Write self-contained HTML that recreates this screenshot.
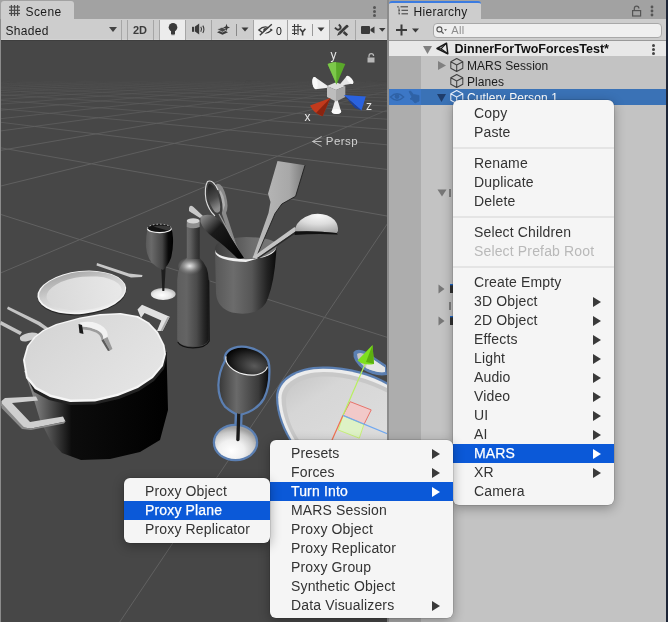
<!DOCTYPE html><html><head><meta charset="utf-8"><style>
*{box-sizing:border-box}
html,body{margin:0;padding:0}
body{width:668px;height:622px;overflow:hidden;position:relative;will-change:transform;background:#a2a2a2;font-family:"Liberation Sans",sans-serif;}
.abs{position:absolute}
.tab{position:absolute;background:#cdcdcd;border-radius:3px 3px 0 0}
.txt{position:absolute;white-space:nowrap;line-height:1}
.tb{position:absolute;top:19px;height:22px;background:#cdcdcd;border-bottom:1px solid #3e3e3e;box-shadow:inset 0 -1px 0 #d3d3d3}
.btn{position:absolute;top:20px;height:20px}
.sep{position:absolute;top:20px;width:1px;height:20px;background:#a6a6a6}
.menu{position:absolute;background:#f5f5f5;border-radius:6px;box-shadow:0 3px 12px rgba(0,0,0,0.32),0 0 0 0.5px rgba(0,0,0,0.18)}
.mi{position:absolute;left:0;right:0;height:19px;font-size:14px;letter-spacing:0.15px;color:#333}
.mi span{position:absolute;top:1.4px}
.hl{background:#0b59d8;color:#fff;-webkit-text-stroke:0.25px #fff}
.arr{position:absolute;width:0;height:0;border-top:5px solid transparent;border-bottom:5px solid transparent;border-left:8px solid #3a3a3a;top:4.5px}
.hl .arr{border-left-color:#fff}
.msep{position:absolute;left:0;right:0;height:2px;background:#e4e4e4}
</style></head><body><div class="tab" style="left:1px;top:1px;width:73px;height:18px"></div><svg class="abs" style="left:8px;top:4px" width="13" height="13" viewBox="0 0 13 13"><g stroke="#4a4a4a" stroke-width="1.2"><line x1="3.4" y1="1" x2="3.4" y2="12"/><line x1="6.5" y1="1" x2="6.5" y2="12"/><line x1="9.6" y1="1" x2="9.6" y2="12"/><line x1="1" y1="3" x2="12" y2="3"/><line x1="1" y1="6.3" x2="12" y2="6.3"/><line x1="1" y1="9.5" x2="12" y2="9.5"/></g></svg><div class="txt" style="left:25.5px;top:6px;font-size:12px;letter-spacing:0.4px;color:#1b1b1b">Scene</div><div class="abs" style="left:373px;top:6px;width:3px;height:3px;border-radius:2px;background:#555"></div><div class="abs" style="left:373px;top:10px;width:3px;height:3px;border-radius:2px;background:#555"></div><div class="abs" style="left:373px;top:14px;width:3px;height:3px;border-radius:2px;background:#555"></div><div class="tb" style="left:0;width:387px"></div><div class="abs" style="left:0;top:19px;width:1px;height:22px;background:#8c8c8c"></div><div class="txt" style="left:5.5px;top:24.5px;font-size:12px;letter-spacing:0.3px;color:#1b1b1b">Shaded</div><div class="abs" style="left:109px;top:27px;width:0;height:0;border-left:4px solid transparent;border-right:4px solid transparent;border-top:5px solid #444"></div><div class="sep" style="left:121px"></div><div class="sep" style="left:127px"></div><div class="txt" style="left:133px;top:25px;font-size:11px;font-weight:bold;color:#3c3c3c">2D</div><div class="sep" style="left:153px"></div><div class="sep" style="left:159px"></div><div class="btn" style="left:160px;width:25px;background:#ececec"></div><div class="sep" style="left:185px"></div><div class="sep" style="left:211px"></div><div class="btn" style="left:254px;width:33px;background:#ececec"></div><div class="sep" style="left:253px"></div><div class="sep" style="left:287px"></div><div class="btn" style="left:288px;width:41px;background:#ececec"></div><div class="sep" style="left:329px"></div><div class="sep" style="left:355px"></div><svg class="abs" style="left:0;top:19px" width="387" height="21" viewBox="0 19 387 21">
<g fill="#3a3a3a">
 <circle cx="173" cy="27.3" r="4.3"/><rect x="171" y="31" width="4" height="3"/><rect x="171.3" y="34" width="3.4" height="1.2" fill="#777"/>
 <rect x="192" y="26.8" width="2.2" height="5"/><path d="M195 26.6 L199.2 23.6 V34.4 L195 31.4 Z"/><path d="M200.8 26.8 q1.6 2.5 0 5" stroke="#3a3a3a" stroke-width="1.1" fill="none"/><path d="M202.8 25.6 q2.2 3.7 0 7.4" stroke="#3a3a3a" stroke-width="1.1" fill="none"/>
 <path d="M217 32.2 L222.5 29.6 L228 32.2 L222.5 34.8 Z"/><path d="M217 29.6 L222 27.2 L225 28.6 L227.5 29.6 L222.5 32.1 Z" fill="#4a4a4a" stroke="#cdcdcd" stroke-width="0.7"/><path d="M226.5 23.8 L227.4 26.6 L230 27.5 L227.4 28.4 L226.5 31.2 L225.6 28.4 L223 27.5 L225.6 26.6 Z"/>
 <rect x="236" y="24" width="1" height="12" fill="#888"/>
 <path d="M241.5 27.5h7l-3.5 4z"/>
 <path d="M258.8 30 Q265.3 23.8 271.8 30 Q265.3 36.2 258.8 30 Z" fill="none" stroke="#3a3a3a" stroke-width="1.3"/><circle cx="265.3" cy="30" r="2.1" fill="#3a3a3a"/><line x1="260.5" y1="36" x2="272.5" y2="25" stroke="#ececec" stroke-width="2.6"/><line x1="259.8" y1="35.2" x2="271.8" y2="24.2" stroke="#3a3a3a" stroke-width="1.4"/>
 <path d="M294.5 24v11M298 24v11M292 26.5h9.5M292 30h7M292 33.5h5" stroke="#3a3a3a" stroke-width="1.1" fill="none"/><path d="M299.8 28.8l2.8 3.2 2.8-3.2M302.6 32v3.5" stroke="#3a3a3a" stroke-width="1.6" fill="none"/>
 <rect x="312" y="24" width="1" height="12" fill="#999"/>
 <path d="M317.5 27.5h7l-3.5 4z"/>
 <path d="M336.2 25 Q335.8 29.6 339.3 29.4 Q341.6 29 341.2 25.4" stroke="#3a3a3a" stroke-width="1.9" fill="none" transform="rotate(-45 338.7 27.5) translate(-0.3 0)"/><path d="M343.6 32 L347.2 35.2" stroke="#3a3a3a" stroke-width="2.6" fill="none"/><path d="M346.3 26.8 L339.6 33.3" stroke="#3a3a3a" stroke-width="2.7" fill="none"/><circle cx="346.9" cy="26.2" r="1.5"/><path d="M338.6 32.3 L340.6 34.3 L337 35.8 Z"/><rect x="361" y="26" width="9" height="8" rx="1"/><path d="M370.5 29l4-2.5v7l-4-2.5z"/>
 <path d="M379 28h6.5l-3.25 3.8z"/>
</g></svg><div class="txt" style="left:276px;top:25.8px;font-size:10.5px;color:#111">0</div><svg class="abs" style="left:0;top:41px" width="387" height="581" viewBox="0 41 387 581">
<defs>
 <linearGradient id="fog" x1="0" y1="0" x2="0" y2="1"><stop offset="0" stop-color="#494949"/><stop offset="1" stop-color="#474747"/></linearGradient>
</defs>
<rect x="0" y="41" width="387" height="581" fill="#474747"/>
<g stroke="#616161" stroke-width="1" fill="none"><line x1="-6.7" y1="810.1" x2="324.5" y2="317.4" stroke-opacity="1.00"/><line x1="324.5" y1="317.4" x2="392.0" y2="216.9" stroke-opacity="1.00"/><line x1="961.8" y1="520.0" x2="324.5" y2="317.4" stroke-opacity="1.00"/><line x1="-269.6" y1="386.9" x2="79.8" y2="239.6" stroke-opacity="1.00"/><line x1="324.5" y1="317.4" x2="79.8" y2="239.6" stroke-opacity="1.00"/><line x1="79.8" y1="239.6" x2="209.9" y2="184.7" stroke-opacity="1.00"/><line x1="79.8" y1="239.6" x2="-49.6" y2="198.4" stroke-opacity="1.00"/><line x1="209.9" y1="184.7" x2="277.8" y2="156.1" stroke-opacity="0.92"/><line x1="277.8" y1="156.1" x2="319.5" y2="138.5" stroke-opacity="0.85"/><line x1="319.5" y1="138.5" x2="347.8" y2="126.6" stroke-opacity="0.78"/><line x1="347.8" y1="126.6" x2="368.2" y2="118.0" stroke-opacity="0.71"/><line x1="368.2" y1="118.0" x2="383.6" y2="111.5" stroke-opacity="0.65"/><line x1="383.6" y1="111.5" x2="395.6" y2="106.4" stroke-opacity="0.59"/><line x1="392.0" y1="216.9" x2="209.9" y2="184.7" stroke-opacity="0.99"/><line x1="-49.6" y1="198.4" x2="91.3" y2="163.8" stroke-opacity="0.95"/><line x1="209.9" y1="184.7" x2="91.3" y2="163.8" stroke-opacity="0.94"/><line x1="91.3" y1="163.8" x2="174.2" y2="143.4" stroke-opacity="0.87"/><line x1="91.3" y1="163.8" x2="8.0" y2="149.1" stroke-opacity="0.89"/><line x1="174.2" y1="143.4" x2="228.8" y2="130.0" stroke-opacity="0.80"/><line x1="8.0" y1="149.1" x2="-53.8" y2="138.2" stroke-opacity="0.84"/><line x1="228.8" y1="130.0" x2="267.5" y2="120.5" stroke-opacity="0.73"/><line x1="267.5" y1="120.5" x2="296.4" y2="113.4" stroke-opacity="0.67"/><line x1="296.4" y1="113.4" x2="318.7" y2="107.9" stroke-opacity="0.61"/><line x1="318.7" y1="107.9" x2="336.5" y2="103.6" stroke-opacity="0.55"/><line x1="336.5" y1="103.6" x2="351.0" y2="100.0" stroke-opacity="0.49"/><line x1="351.0" y1="100.0" x2="363.1" y2="97.0" stroke-opacity="0.44"/><line x1="363.1" y1="97.0" x2="373.3" y2="94.5" stroke-opacity="0.39"/><line x1="373.3" y1="94.5" x2="382.0" y2="92.4" stroke-opacity="0.34"/><line x1="382.0" y1="92.4" x2="389.6" y2="90.5" stroke-opacity="0.30"/><line x1="389.6" y1="90.5" x2="396.2" y2="88.9" stroke-opacity="0.25"/><line x1="421.1" y1="173.6" x2="277.8" y2="156.1" stroke-opacity="0.91"/><line x1="-129.7" y1="173.0" x2="8.0" y2="149.1" stroke-opacity="0.90"/><line x1="277.8" y1="156.1" x2="174.2" y2="143.4" stroke-opacity="0.86"/><line x1="8.0" y1="149.1" x2="95.9" y2="133.9" stroke-opacity="0.83"/><line x1="174.2" y1="143.4" x2="95.9" y2="133.9" stroke-opacity="0.81"/><line x1="95.9" y1="133.9" x2="156.8" y2="123.3" stroke-opacity="0.76"/><line x1="95.9" y1="133.9" x2="34.5" y2="126.4" stroke-opacity="0.77"/><line x1="156.8" y1="123.3" x2="201.6" y2="115.5" stroke-opacity="0.69"/><line x1="34.5" y1="126.4" x2="-14.9" y2="120.4" stroke-opacity="0.72"/><line x1="201.6" y1="115.5" x2="235.9" y2="109.6" stroke-opacity="0.63"/><line x1="235.9" y1="109.6" x2="263.0" y2="104.9" stroke-opacity="0.57"/><line x1="263.0" y1="104.9" x2="285.0" y2="101.1" stroke-opacity="0.51"/><line x1="285.0" y1="101.1" x2="303.1" y2="98.0" stroke-opacity="0.45"/><line x1="303.1" y1="98.0" x2="318.3" y2="95.3" stroke-opacity="0.40"/><line x1="318.3" y1="95.3" x2="331.3" y2="93.1" stroke-opacity="0.35"/><line x1="331.3" y1="93.1" x2="342.6" y2="91.1" stroke-opacity="0.31"/><line x1="342.6" y1="91.1" x2="352.3" y2="89.4" stroke-opacity="0.27"/><line x1="352.3" y1="89.4" x2="360.9" y2="87.9" stroke-opacity="0.23"/><line x1="360.9" y1="87.9" x2="368.5" y2="86.6" stroke-opacity="0.19"/><line x1="368.5" y1="86.6" x2="375.3" y2="85.4" stroke-opacity="0.16"/><line x1="375.3" y1="85.4" x2="381.4" y2="84.4" stroke-opacity="0.13"/><line x1="381.4" y1="84.4" x2="386.9" y2="83.4" stroke-opacity="0.10"/><line x1="386.9" y1="83.4" x2="391.9" y2="82.6" stroke-opacity="0.08"/><line x1="391.9" y1="82.6" x2="396.4" y2="81.8" stroke-opacity="0.06"/><line x1="437.3" y1="149.5" x2="319.5" y2="138.5" stroke-opacity="0.84"/><line x1="319.5" y1="138.5" x2="228.8" y2="130.0" stroke-opacity="0.79"/><line x1="-53.8" y1="138.2" x2="34.5" y2="126.4" stroke-opacity="0.78"/><line x1="228.8" y1="130.0" x2="156.8" y2="123.3" stroke-opacity="0.75"/><line x1="34.5" y1="126.4" x2="98.3" y2="117.8" stroke-opacity="0.71"/><line x1="156.8" y1="123.3" x2="98.3" y2="117.8" stroke-opacity="0.70"/><line x1="98.3" y1="117.8" x2="146.5" y2="111.4" stroke-opacity="0.65"/><line x1="98.3" y1="117.8" x2="49.7" y2="113.3" stroke-opacity="0.66"/><line x1="146.5" y1="111.4" x2="184.3" y2="106.3" stroke-opacity="0.59"/><line x1="49.7" y1="113.3" x2="8.8" y2="109.5" stroke-opacity="0.62"/><line x1="184.3" y1="106.3" x2="214.7" y2="102.3" stroke-opacity="0.53"/><line x1="8.8" y1="109.5" x2="-26.1" y2="106.2" stroke-opacity="0.57"/><line x1="214.7" y1="102.3" x2="239.6" y2="98.9" stroke-opacity="0.47"/><line x1="239.6" y1="98.9" x2="260.5" y2="96.1" stroke-opacity="0.42"/><line x1="260.5" y1="96.1" x2="278.2" y2="93.8" stroke-opacity="0.37"/><line x1="278.2" y1="93.8" x2="293.4" y2="91.7" stroke-opacity="0.32"/><line x1="293.4" y1="91.7" x2="306.6" y2="90.0" stroke-opacity="0.28"/><line x1="306.6" y1="90.0" x2="318.2" y2="88.4" stroke-opacity="0.24"/><line x1="318.2" y1="88.4" x2="328.4" y2="87.0" stroke-opacity="0.20"/><line x1="328.4" y1="87.0" x2="337.5" y2="85.8" stroke-opacity="0.17"/><line x1="337.5" y1="85.8" x2="345.7" y2="84.7" stroke-opacity="0.14"/><line x1="345.7" y1="84.7" x2="353.0" y2="83.7" stroke-opacity="0.11"/><line x1="353.0" y1="83.7" x2="359.7" y2="82.8" stroke-opacity="0.09"/><line x1="359.7" y1="82.8" x2="365.7" y2="82.0" stroke-opacity="0.07"/><line x1="365.7" y1="82.0" x2="371.3" y2="81.3" stroke-opacity="0.05"/><line x1="371.3" y1="81.3" x2="376.3" y2="80.6" stroke-opacity="0.03"/><line x1="447.6" y1="134.1" x2="347.8" y2="126.6" stroke-opacity="0.77"/><line x1="347.8" y1="126.6" x2="267.5" y2="120.5" stroke-opacity="0.72"/><line x1="267.5" y1="120.5" x2="201.6" y2="115.5" stroke-opacity="0.68"/><line x1="-14.9" y1="120.4" x2="49.7" y2="113.3" stroke-opacity="0.67"/><line x1="201.6" y1="115.5" x2="146.5" y2="111.4" stroke-opacity="0.64"/><line x1="49.7" y1="113.3" x2="99.8" y2="107.8" stroke-opacity="0.61"/><line x1="146.5" y1="111.4" x2="99.8" y2="107.8" stroke-opacity="0.60"/><line x1="99.8" y1="107.8" x2="139.7" y2="103.5" stroke-opacity="0.55"/><line x1="99.8" y1="107.8" x2="59.6" y2="104.8" stroke-opacity="0.56"/><line x1="139.7" y1="103.5" x2="172.3" y2="99.9" stroke-opacity="0.49"/><line x1="59.6" y1="104.8" x2="24.8" y2="102.2" stroke-opacity="0.52"/><line x1="172.3" y1="99.9" x2="199.4" y2="97.0" stroke-opacity="0.44"/><line x1="24.8" y1="102.2" x2="-5.8" y2="99.9" stroke-opacity="0.48"/><line x1="199.4" y1="97.0" x2="222.3" y2="94.5" stroke-opacity="0.39"/><line x1="222.3" y1="94.5" x2="241.9" y2="92.4" stroke-opacity="0.34"/><line x1="241.9" y1="92.4" x2="258.8" y2="90.5" stroke-opacity="0.29"/><line x1="258.8" y1="90.5" x2="273.7" y2="88.9" stroke-opacity="0.25"/><line x1="273.7" y1="88.9" x2="286.7" y2="87.5" stroke-opacity="0.22"/><line x1="286.7" y1="87.5" x2="298.3" y2="86.2" stroke-opacity="0.18"/><line x1="298.3" y1="86.2" x2="308.7" y2="85.1" stroke-opacity="0.15"/><line x1="308.7" y1="85.1" x2="318.0" y2="84.0" stroke-opacity="0.12"/><line x1="318.0" y1="84.0" x2="326.5" y2="83.1" stroke-opacity="0.10"/><line x1="326.5" y1="83.1" x2="334.1" y2="82.3" stroke-opacity="0.07"/><line x1="334.1" y1="82.3" x2="341.1" y2="81.5" stroke-opacity="0.05"/><line x1="341.1" y1="81.5" x2="347.5" y2="80.8" stroke-opacity="0.04"/><line x1="347.5" y1="80.8" x2="353.4" y2="80.2" stroke-opacity="0.02"/><line x1="454.8" y1="123.5" x2="368.2" y2="118.0" stroke-opacity="0.70"/><line x1="368.2" y1="118.0" x2="296.4" y2="113.4" stroke-opacity="0.66"/><line x1="296.4" y1="113.4" x2="235.9" y2="109.6" stroke-opacity="0.62"/><line x1="-55.4" y1="115.4" x2="8.8" y2="109.5" stroke-opacity="0.63"/><line x1="235.9" y1="109.6" x2="184.3" y2="106.3" stroke-opacity="0.58"/><line x1="8.8" y1="109.5" x2="59.6" y2="104.8" stroke-opacity="0.56"/><line x1="184.3" y1="106.3" x2="139.7" y2="103.5" stroke-opacity="0.54"/><line x1="59.6" y1="104.8" x2="100.8" y2="101.0" stroke-opacity="0.51"/><line x1="139.7" y1="103.5" x2="100.8" y2="101.0" stroke-opacity="0.50"/><line x1="100.8" y1="101.0" x2="134.9" y2="97.9" stroke-opacity="0.45"/><line x1="100.8" y1="101.0" x2="66.6" y2="98.9" stroke-opacity="0.46"/><line x1="134.9" y1="97.9" x2="163.5" y2="95.3" stroke-opacity="0.40"/><line x1="66.6" y1="98.9" x2="36.3" y2="96.9" stroke-opacity="0.43"/><line x1="163.5" y1="95.3" x2="187.9" y2="93.0" stroke-opacity="0.35"/><line x1="36.3" y1="96.9" x2="9.2" y2="95.2" stroke-opacity="0.39"/><line x1="187.9" y1="93.0" x2="209.0" y2="91.1" stroke-opacity="0.31"/><line x1="9.2" y1="95.2" x2="-15.2" y2="93.7" stroke-opacity="0.36"/><line x1="209.0" y1="91.1" x2="227.3" y2="89.4" stroke-opacity="0.27"/><line x1="227.3" y1="89.4" x2="243.4" y2="87.9" stroke-opacity="0.23"/><line x1="243.4" y1="87.9" x2="257.7" y2="86.6" stroke-opacity="0.19"/><line x1="257.7" y1="86.6" x2="270.5" y2="85.4" stroke-opacity="0.16"/><line x1="270.5" y1="85.4" x2="281.9" y2="84.4" stroke-opacity="0.13"/><line x1="281.9" y1="84.4" x2="292.2" y2="83.4" stroke-opacity="0.10"/><line x1="292.2" y1="83.4" x2="301.6" y2="82.6" stroke-opacity="0.08"/><line x1="301.6" y1="82.6" x2="310.1" y2="81.8" stroke-opacity="0.06"/><line x1="310.1" y1="81.8" x2="318.0" y2="81.0" stroke-opacity="0.04"/><line x1="318.0" y1="81.0" x2="325.1" y2="80.4" stroke-opacity="0.03"/><line x1="460.0" y1="115.7" x2="383.6" y2="111.5" stroke-opacity="0.64"/><line x1="383.6" y1="111.5" x2="318.7" y2="107.9" stroke-opacity="0.60"/><line x1="318.7" y1="107.9" x2="263.0" y2="104.9" stroke-opacity="0.56"/><line x1="263.0" y1="104.9" x2="214.7" y2="102.3" stroke-opacity="0.52"/><line x1="-26.1" y1="106.2" x2="24.8" y2="102.2" stroke-opacity="0.53"/><line x1="214.7" y1="102.3" x2="172.3" y2="99.9" stroke-opacity="0.48"/><line x1="24.8" y1="102.2" x2="66.6" y2="98.9" stroke-opacity="0.47"/><line x1="172.3" y1="99.9" x2="134.9" y2="97.9" stroke-opacity="0.44"/><line x1="66.6" y1="98.9" x2="101.6" y2="96.1" stroke-opacity="0.42"/><line x1="134.9" y1="97.9" x2="101.6" y2="96.1" stroke-opacity="0.41"/><line x1="101.6" y1="96.1" x2="131.3" y2="93.7" stroke-opacity="0.37"/><line x1="101.6" y1="96.1" x2="71.8" y2="94.4" stroke-opacity="0.38"/><line x1="131.3" y1="93.7" x2="156.8" y2="91.7" stroke-opacity="0.32"/><line x1="71.8" y1="94.4" x2="44.9" y2="93.0" stroke-opacity="0.35"/><line x1="156.8" y1="91.7" x2="178.9" y2="89.9" stroke-opacity="0.28"/><line x1="44.9" y1="93.0" x2="20.6" y2="91.6" stroke-opacity="0.32"/><line x1="178.9" y1="89.9" x2="198.4" y2="88.4" stroke-opacity="0.24"/><line x1="20.6" y1="91.6" x2="-1.6" y2="90.4" stroke-opacity="0.29"/><line x1="198.4" y1="88.4" x2="215.5" y2="87.0" stroke-opacity="0.20"/><line x1="-1.6" y1="90.4" x2="-21.8" y2="89.3" stroke-opacity="0.26"/><line x1="215.5" y1="87.0" x2="230.8" y2="85.8" stroke-opacity="0.17"/><line x1="230.8" y1="85.8" x2="244.5" y2="84.7" stroke-opacity="0.14"/><line x1="244.5" y1="84.7" x2="256.9" y2="83.7" stroke-opacity="0.11"/><line x1="256.9" y1="83.7" x2="268.1" y2="82.8" stroke-opacity="0.09"/><line x1="268.1" y1="82.8" x2="278.2" y2="82.0" stroke-opacity="0.07"/><line x1="278.2" y1="82.0" x2="287.5" y2="81.3" stroke-opacity="0.05"/><line x1="287.5" y1="81.3" x2="296.1" y2="80.6" stroke-opacity="0.03"/><line x1="395.6" y1="106.4" x2="336.5" y2="103.6" stroke-opacity="0.54"/><line x1="336.5" y1="103.6" x2="285.0" y2="101.1" stroke-opacity="0.50"/><line x1="285.0" y1="101.1" x2="239.6" y2="98.9" stroke-opacity="0.46"/><line x1="239.6" y1="98.9" x2="199.4" y2="97.0" stroke-opacity="0.43"/><line x1="-5.8" y1="99.9" x2="36.3" y2="96.9" stroke-opacity="0.44"/><line x1="199.4" y1="97.0" x2="163.5" y2="95.3" stroke-opacity="0.39"/><line x1="36.3" y1="96.9" x2="71.8" y2="94.4" stroke-opacity="0.39"/><line x1="163.5" y1="95.3" x2="131.3" y2="93.7" stroke-opacity="0.36"/><line x1="71.8" y1="94.4" x2="102.2" y2="92.3" stroke-opacity="0.34"/><line x1="131.3" y1="93.7" x2="102.2" y2="92.3" stroke-opacity="0.33"/><line x1="102.2" y1="92.3" x2="128.5" y2="90.5" stroke-opacity="0.29"/><line x1="102.2" y1="92.3" x2="75.7" y2="91.0" stroke-opacity="0.30"/><line x1="128.5" y1="90.5" x2="151.5" y2="88.9" stroke-opacity="0.25"/><line x1="75.7" y1="91.0" x2="51.6" y2="89.9" stroke-opacity="0.27"/><line x1="151.5" y1="88.9" x2="171.7" y2="87.4" stroke-opacity="0.22"/><line x1="51.6" y1="89.9" x2="29.6" y2="88.8" stroke-opacity="0.25"/><line x1="171.7" y1="87.4" x2="189.8" y2="86.2" stroke-opacity="0.18"/><line x1="29.6" y1="88.8" x2="9.3" y2="87.9" stroke-opacity="0.22"/><line x1="189.8" y1="86.2" x2="205.9" y2="85.0" stroke-opacity="0.15"/><line x1="9.3" y1="87.9" x2="-9.4" y2="87.0" stroke-opacity="0.20"/><line x1="205.9" y1="85.0" x2="220.4" y2="84.0" stroke-opacity="0.12"/><line x1="220.4" y1="84.0" x2="233.5" y2="83.1" stroke-opacity="0.09"/><line x1="233.5" y1="83.1" x2="245.4" y2="82.3" stroke-opacity="0.07"/><line x1="245.4" y1="82.3" x2="256.2" y2="81.5" stroke-opacity="0.05"/><line x1="256.2" y1="81.5" x2="266.2" y2="80.8" stroke-opacity="0.04"/><line x1="266.2" y1="80.8" x2="275.4" y2="80.2" stroke-opacity="0.02"/><line x1="405.3" y1="102.3" x2="351.0" y2="100.0" stroke-opacity="0.48"/><line x1="351.0" y1="100.0" x2="303.1" y2="98.0" stroke-opacity="0.45"/><line x1="303.1" y1="98.0" x2="260.5" y2="96.1" stroke-opacity="0.41"/><line x1="260.5" y1="96.1" x2="222.3" y2="94.5" stroke-opacity="0.38"/><line x1="-32.8" y1="97.8" x2="9.2" y2="95.2" stroke-opacity="0.40"/><line x1="222.3" y1="94.5" x2="187.9" y2="93.0" stroke-opacity="0.35"/><line x1="9.2" y1="95.2" x2="44.9" y2="93.0" stroke-opacity="0.35"/><line x1="187.9" y1="93.0" x2="156.8" y2="91.7" stroke-opacity="0.32"/><line x1="44.9" y1="93.0" x2="75.7" y2="91.0" stroke-opacity="0.31"/><line x1="156.8" y1="91.7" x2="128.5" y2="90.5" stroke-opacity="0.29"/><line x1="75.7" y1="91.0" x2="102.6" y2="89.4" stroke-opacity="0.27"/><line x1="128.5" y1="90.5" x2="102.6" y2="89.4" stroke-opacity="0.26"/><line x1="102.6" y1="89.4" x2="126.2" y2="87.9" stroke-opacity="0.23"/><line x1="102.6" y1="89.4" x2="78.9" y2="88.3" stroke-opacity="0.23"/><line x1="126.2" y1="87.9" x2="147.2" y2="86.6" stroke-opacity="0.19"/><line x1="78.9" y1="88.3" x2="57.0" y2="87.4" stroke-opacity="0.21"/><line x1="147.2" y1="86.6" x2="165.9" y2="85.4" stroke-opacity="0.16"/><line x1="57.0" y1="87.4" x2="36.9" y2="86.5" stroke-opacity="0.19"/><line x1="165.9" y1="85.4" x2="182.6" y2="84.3" stroke-opacity="0.13"/><line x1="36.9" y1="86.5" x2="18.2" y2="85.7" stroke-opacity="0.16"/><line x1="182.6" y1="84.3" x2="197.8" y2="83.4" stroke-opacity="0.10"/><line x1="18.2" y1="85.7" x2="0.9" y2="85.0" stroke-opacity="0.14"/><line x1="197.8" y1="83.4" x2="211.5" y2="82.5" stroke-opacity="0.08"/><line x1="0.9" y1="85.0" x2="-15.3" y2="84.3" stroke-opacity="0.12"/><line x1="211.5" y1="82.5" x2="224.0" y2="81.8" stroke-opacity="0.06"/><line x1="224.0" y1="81.8" x2="235.5" y2="81.0" stroke-opacity="0.04"/><line x1="235.5" y1="81.0" x2="246.0" y2="80.4" stroke-opacity="0.03"/><line x1="413.2" y1="99.0" x2="363.1" y2="97.0" stroke-opacity="0.43"/><line x1="363.1" y1="97.0" x2="318.3" y2="95.3" stroke-opacity="0.40"/><line x1="318.3" y1="95.3" x2="278.2" y2="93.8" stroke-opacity="0.36"/><line x1="278.2" y1="93.8" x2="241.9" y2="92.4" stroke-opacity="0.33"/><line x1="241.9" y1="92.4" x2="209.0" y2="91.1" stroke-opacity="0.30"/><line x1="-15.2" y1="93.7" x2="20.6" y2="91.6" stroke-opacity="0.32"/><line x1="209.0" y1="91.1" x2="178.9" y2="89.9" stroke-opacity="0.27"/><line x1="20.6" y1="91.6" x2="51.6" y2="89.9" stroke-opacity="0.28"/><line x1="178.9" y1="89.9" x2="151.5" y2="88.9" stroke-opacity="0.25"/><line x1="51.6" y1="89.9" x2="78.9" y2="88.3" stroke-opacity="0.24"/><line x1="151.5" y1="88.9" x2="126.2" y2="87.9" stroke-opacity="0.22"/><line x1="78.9" y1="88.3" x2="103.0" y2="87.0" stroke-opacity="0.20"/><line x1="126.2" y1="87.9" x2="103.0" y2="87.0" stroke-opacity="0.20"/><line x1="103.0" y1="87.0" x2="124.4" y2="85.8" stroke-opacity="0.17"/><line x1="103.0" y1="87.0" x2="81.4" y2="86.1" stroke-opacity="0.17"/><line x1="124.4" y1="85.8" x2="143.6" y2="84.7" stroke-opacity="0.14"/><line x1="81.4" y1="86.1" x2="61.5" y2="85.4" stroke-opacity="0.15"/><line x1="143.6" y1="84.7" x2="160.9" y2="83.7" stroke-opacity="0.11"/><line x1="61.5" y1="85.4" x2="42.9" y2="84.7" stroke-opacity="0.13"/><line x1="160.9" y1="83.7" x2="176.6" y2="82.8" stroke-opacity="0.09"/><line x1="42.9" y1="84.7" x2="25.6" y2="84.0" stroke-opacity="0.11"/><line x1="176.6" y1="82.8" x2="190.9" y2="82.0" stroke-opacity="0.06"/><line x1="25.6" y1="84.0" x2="9.4" y2="83.4" stroke-opacity="0.10"/><line x1="190.9" y1="82.0" x2="203.9" y2="81.3" stroke-opacity="0.05"/><line x1="9.4" y1="83.4" x2="-5.7" y2="82.8" stroke-opacity="0.08"/><line x1="203.9" y1="81.3" x2="215.9" y2="80.6" stroke-opacity="0.03"/><line x1="419.9" y1="96.2" x2="373.3" y2="94.5" stroke-opacity="0.38"/><line x1="373.3" y1="94.5" x2="331.3" y2="93.1" stroke-opacity="0.35"/><line x1="331.3" y1="93.1" x2="293.4" y2="91.7" stroke-opacity="0.32"/><line x1="293.4" y1="91.7" x2="258.8" y2="90.5" stroke-opacity="0.29"/><line x1="258.8" y1="90.5" x2="227.3" y2="89.4" stroke-opacity="0.26"/><line x1="-37.2" y1="92.3" x2="-1.6" y2="90.4" stroke-opacity="0.29"/><line x1="227.3" y1="89.4" x2="198.4" y2="88.4" stroke-opacity="0.23"/><line x1="-1.6" y1="90.4" x2="29.6" y2="88.8" stroke-opacity="0.25"/><line x1="198.4" y1="88.4" x2="171.7" y2="87.4" stroke-opacity="0.21"/><line x1="29.6" y1="88.8" x2="57.0" y2="87.4" stroke-opacity="0.21"/><line x1="171.7" y1="87.4" x2="147.2" y2="86.6" stroke-opacity="0.19"/><line x1="57.0" y1="87.4" x2="81.4" y2="86.1" stroke-opacity="0.18"/><line x1="147.2" y1="86.6" x2="124.4" y2="85.8" stroke-opacity="0.16"/><line x1="81.4" y1="86.1" x2="103.3" y2="85.0" stroke-opacity="0.15"/><line x1="124.4" y1="85.8" x2="103.3" y2="85.0" stroke-opacity="0.14"/><line x1="103.3" y1="85.0" x2="122.9" y2="84.0" stroke-opacity="0.12"/><line x1="103.3" y1="85.0" x2="83.6" y2="84.3" stroke-opacity="0.12"/><line x1="122.9" y1="84.0" x2="140.6" y2="83.1" stroke-opacity="0.09"/><line x1="83.6" y1="84.3" x2="65.2" y2="83.7" stroke-opacity="0.11"/><line x1="140.6" y1="83.1" x2="156.8" y2="82.3" stroke-opacity="0.07"/><line x1="65.2" y1="83.7" x2="48.0" y2="83.1" stroke-opacity="0.09"/><line x1="156.8" y1="82.3" x2="171.5" y2="81.5" stroke-opacity="0.05"/><line x1="48.0" y1="83.1" x2="31.8" y2="82.5" stroke-opacity="0.07"/><line x1="171.5" y1="81.5" x2="185.0" y2="80.8" stroke-opacity="0.04"/><line x1="31.8" y1="82.5" x2="16.7" y2="82.0" stroke-opacity="0.06"/><line x1="185.0" y1="80.8" x2="197.4" y2="80.2" stroke-opacity="0.02"/><line x1="16.7" y1="82.0" x2="2.4" y2="81.5" stroke-opacity="0.05"/><line x1="2.4" y1="81.5" x2="-11.0" y2="81.0" stroke-opacity="0.04"/><line x1="425.5" y1="93.8" x2="382.0" y2="92.4" stroke-opacity="0.33"/><line x1="382.0" y1="92.4" x2="342.6" y2="91.1" stroke-opacity="0.30"/><line x1="342.6" y1="91.1" x2="306.6" y2="90.0" stroke-opacity="0.27"/><line x1="306.6" y1="90.0" x2="273.7" y2="88.9" stroke-opacity="0.25"/><line x1="273.7" y1="88.9" x2="243.4" y2="87.9" stroke-opacity="0.22"/><line x1="243.4" y1="87.9" x2="215.5" y2="87.0" stroke-opacity="0.20"/><line x1="-21.8" y1="89.3" x2="9.3" y2="87.9" stroke-opacity="0.23"/><line x1="215.5" y1="87.0" x2="189.8" y2="86.2" stroke-opacity="0.18"/><line x1="9.3" y1="87.9" x2="36.9" y2="86.5" stroke-opacity="0.19"/><line x1="189.8" y1="86.2" x2="165.9" y2="85.4" stroke-opacity="0.15"/><line x1="36.9" y1="86.5" x2="61.5" y2="85.4" stroke-opacity="0.16"/><line x1="165.9" y1="85.4" x2="143.6" y2="84.7" stroke-opacity="0.13"/><line x1="61.5" y1="85.4" x2="83.6" y2="84.3" stroke-opacity="0.13"/><line x1="143.6" y1="84.7" x2="122.9" y2="84.0" stroke-opacity="0.12"/><line x1="83.6" y1="84.3" x2="103.5" y2="83.4" stroke-opacity="0.10"/><line x1="122.9" y1="84.0" x2="103.5" y2="83.4" stroke-opacity="0.10"/><line x1="103.5" y1="83.4" x2="121.6" y2="82.5" stroke-opacity="0.08"/><line x1="103.5" y1="83.4" x2="85.4" y2="82.8" stroke-opacity="0.08"/><line x1="121.6" y1="82.5" x2="138.1" y2="81.7" stroke-opacity="0.06"/><line x1="85.4" y1="82.8" x2="68.3" y2="82.2" stroke-opacity="0.07"/><line x1="138.1" y1="81.7" x2="153.2" y2="81.0" stroke-opacity="0.04"/><line x1="68.3" y1="82.2" x2="52.3" y2="81.7" stroke-opacity="0.05"/><line x1="153.2" y1="81.0" x2="167.1" y2="80.4" stroke-opacity="0.03"/><line x1="52.3" y1="81.7" x2="37.2" y2="81.2" stroke-opacity="0.04"/><line x1="37.2" y1="81.2" x2="23.0" y2="80.8" stroke-opacity="0.03"/><line x1="23.0" y1="80.8" x2="9.5" y2="80.3" stroke-opacity="0.02"/><line x1="430.4" y1="91.8" x2="389.6" y2="90.5" stroke-opacity="0.29"/><line x1="389.6" y1="90.5" x2="352.3" y2="89.4" stroke-opacity="0.26"/><line x1="352.3" y1="89.4" x2="318.2" y2="88.4" stroke-opacity="0.24"/><line x1="318.2" y1="88.4" x2="286.7" y2="87.5" stroke-opacity="0.21"/><line x1="286.7" y1="87.5" x2="257.7" y2="86.6" stroke-opacity="0.19"/><line x1="257.7" y1="86.6" x2="230.8" y2="85.8" stroke-opacity="0.16"/><line x1="230.8" y1="85.8" x2="205.9" y2="85.0" stroke-opacity="0.14"/><line x1="-9.4" y1="87.0" x2="18.2" y2="85.7" stroke-opacity="0.17"/><line x1="205.9" y1="85.0" x2="182.6" y2="84.3" stroke-opacity="0.12"/><line x1="18.2" y1="85.7" x2="42.9" y2="84.7" stroke-opacity="0.14"/><line x1="182.6" y1="84.3" x2="160.9" y2="83.7" stroke-opacity="0.11"/><line x1="42.9" y1="84.7" x2="65.2" y2="83.7" stroke-opacity="0.11"/><line x1="160.9" y1="83.7" x2="140.6" y2="83.1" stroke-opacity="0.09"/><line x1="65.2" y1="83.7" x2="85.4" y2="82.8" stroke-opacity="0.09"/><line x1="140.6" y1="83.1" x2="121.6" y2="82.5" stroke-opacity="0.08"/><line x1="85.4" y1="82.8" x2="103.7" y2="82.0" stroke-opacity="0.06"/><line x1="121.6" y1="82.5" x2="103.7" y2="82.0" stroke-opacity="0.06"/><line x1="103.7" y1="82.0" x2="120.5" y2="81.2" stroke-opacity="0.05"/><line x1="103.7" y1="82.0" x2="86.9" y2="81.5" stroke-opacity="0.05"/><line x1="120.5" y1="81.2" x2="135.9" y2="80.6" stroke-opacity="0.03"/><line x1="86.9" y1="81.5" x2="71.0" y2="81.0" stroke-opacity="0.04"/><line x1="71.0" y1="81.0" x2="56.0" y2="80.6" stroke-opacity="0.03"/><line x1="56.0" y1="80.6" x2="41.8" y2="80.1" stroke-opacity="0.02"/><line x1="396.2" y1="88.9" x2="360.9" y2="87.9" stroke-opacity="0.22"/><line x1="360.9" y1="87.9" x2="328.4" y2="87.0" stroke-opacity="0.20"/><line x1="328.4" y1="87.0" x2="298.3" y2="86.2" stroke-opacity="0.18"/><line x1="298.3" y1="86.2" x2="270.5" y2="85.4" stroke-opacity="0.15"/><line x1="270.5" y1="85.4" x2="244.5" y2="84.7" stroke-opacity="0.13"/><line x1="244.5" y1="84.7" x2="220.4" y2="84.0" stroke-opacity="0.12"/><line x1="-26.6" y1="86.1" x2="0.9" y2="85.0" stroke-opacity="0.15"/><line x1="220.4" y1="84.0" x2="197.8" y2="83.4" stroke-opacity="0.10"/><line x1="0.9" y1="85.0" x2="25.6" y2="84.0" stroke-opacity="0.12"/><line x1="197.8" y1="83.4" x2="176.6" y2="82.8" stroke-opacity="0.08"/><line x1="25.6" y1="84.0" x2="48.0" y2="83.1" stroke-opacity="0.09"/><line x1="176.6" y1="82.8" x2="156.8" y2="82.3" stroke-opacity="0.07"/><line x1="48.0" y1="83.1" x2="68.3" y2="82.2" stroke-opacity="0.07"/><line x1="156.8" y1="82.3" x2="138.1" y2="81.7" stroke-opacity="0.06"/><line x1="68.3" y1="82.2" x2="86.9" y2="81.5" stroke-opacity="0.05"/><line x1="138.1" y1="81.7" x2="120.5" y2="81.2" stroke-opacity="0.04"/><line x1="86.9" y1="81.5" x2="103.9" y2="80.8" stroke-opacity="0.04"/><line x1="120.5" y1="81.2" x2="103.9" y2="80.8" stroke-opacity="0.03"/><line x1="103.9" y1="80.8" x2="119.5" y2="80.1" stroke-opacity="0.02"/><line x1="103.9" y1="80.8" x2="88.2" y2="80.4" stroke-opacity="0.02"/><line x1="402.0" y1="87.5" x2="368.5" y2="86.6" stroke-opacity="0.19"/><line x1="368.5" y1="86.6" x2="337.5" y2="85.8" stroke-opacity="0.17"/><line x1="337.5" y1="85.8" x2="308.7" y2="85.1" stroke-opacity="0.14"/><line x1="308.7" y1="85.1" x2="281.9" y2="84.4" stroke-opacity="0.13"/><line x1="281.9" y1="84.4" x2="256.9" y2="83.7" stroke-opacity="0.11"/><line x1="256.9" y1="83.7" x2="233.5" y2="83.1" stroke-opacity="0.09"/><line x1="233.5" y1="83.1" x2="211.5" y2="82.5" stroke-opacity="0.08"/><line x1="-15.3" y1="84.3" x2="9.4" y2="83.4" stroke-opacity="0.10"/><line x1="211.5" y1="82.5" x2="190.9" y2="82.0" stroke-opacity="0.06"/><line x1="9.4" y1="83.4" x2="31.8" y2="82.5" stroke-opacity="0.08"/><line x1="190.9" y1="82.0" x2="171.5" y2="81.5" stroke-opacity="0.05"/><line x1="31.8" y1="82.5" x2="52.3" y2="81.7" stroke-opacity="0.06"/><line x1="171.5" y1="81.5" x2="153.2" y2="81.0" stroke-opacity="0.04"/><line x1="52.3" y1="81.7" x2="71.0" y2="81.0" stroke-opacity="0.04"/><line x1="153.2" y1="81.0" x2="135.9" y2="80.6" stroke-opacity="0.03"/><line x1="71.0" y1="81.0" x2="88.2" y2="80.4" stroke-opacity="0.03"/><line x1="135.9" y1="80.6" x2="119.5" y2="80.1" stroke-opacity="0.02"/><line x1="407.1" y1="86.2" x2="375.3" y2="85.4" stroke-opacity="0.16"/><line x1="375.3" y1="85.4" x2="345.7" y2="84.7" stroke-opacity="0.13"/><line x1="345.7" y1="84.7" x2="318.0" y2="84.0" stroke-opacity="0.12"/><line x1="318.0" y1="84.0" x2="292.2" y2="83.4" stroke-opacity="0.10"/><line x1="292.2" y1="83.4" x2="268.1" y2="82.8" stroke-opacity="0.08"/><line x1="268.1" y1="82.8" x2="245.4" y2="82.3" stroke-opacity="0.07"/><line x1="245.4" y1="82.3" x2="224.0" y2="81.8" stroke-opacity="0.06"/><line x1="224.0" y1="81.8" x2="203.9" y2="81.3" stroke-opacity="0.04"/><line x1="-5.7" y1="82.8" x2="16.7" y2="82.0" stroke-opacity="0.06"/><line x1="203.9" y1="81.3" x2="185.0" y2="80.8" stroke-opacity="0.03"/><line x1="16.7" y1="82.0" x2="37.2" y2="81.2" stroke-opacity="0.05"/><line x1="185.0" y1="80.8" x2="167.1" y2="80.4" stroke-opacity="0.02"/><line x1="37.2" y1="81.2" x2="56.0" y2="80.6" stroke-opacity="0.03"/><line x1="411.8" y1="85.1" x2="381.4" y2="84.4" stroke-opacity="0.13"/><line x1="381.4" y1="84.4" x2="353.0" y2="83.7" stroke-opacity="0.11"/><line x1="353.0" y1="83.7" x2="326.5" y2="83.1" stroke-opacity="0.09"/><line x1="326.5" y1="83.1" x2="301.6" y2="82.6" stroke-opacity="0.08"/><line x1="301.6" y1="82.6" x2="278.2" y2="82.0" stroke-opacity="0.06"/><line x1="278.2" y1="82.0" x2="256.2" y2="81.5" stroke-opacity="0.05"/><line x1="256.2" y1="81.5" x2="235.5" y2="81.0" stroke-opacity="0.04"/><line x1="235.5" y1="81.0" x2="215.9" y2="80.6" stroke-opacity="0.03"/><line x1="-20.0" y1="82.2" x2="2.4" y2="81.5" stroke-opacity="0.05"/><line x1="215.9" y1="80.6" x2="197.4" y2="80.2" stroke-opacity="0.02"/><line x1="2.4" y1="81.5" x2="23.0" y2="80.8" stroke-opacity="0.04"/><line x1="23.0" y1="80.8" x2="41.8" y2="80.1" stroke-opacity="0.02"/><line x1="415.9" y1="84.1" x2="386.9" y2="83.4" stroke-opacity="0.10"/><line x1="386.9" y1="83.4" x2="359.7" y2="82.8" stroke-opacity="0.08"/><line x1="359.7" y1="82.8" x2="334.1" y2="82.3" stroke-opacity="0.07"/><line x1="334.1" y1="82.3" x2="310.1" y2="81.8" stroke-opacity="0.06"/><line x1="310.1" y1="81.8" x2="287.5" y2="81.3" stroke-opacity="0.04"/><line x1="287.5" y1="81.3" x2="266.2" y2="80.8" stroke-opacity="0.03"/><line x1="266.2" y1="80.8" x2="246.0" y2="80.4" stroke-opacity="0.02"/><line x1="-11.0" y1="81.0" x2="9.5" y2="80.3" stroke-opacity="0.03"/><line x1="419.7" y1="83.1" x2="391.9" y2="82.6" stroke-opacity="0.08"/><line x1="391.9" y1="82.6" x2="365.7" y2="82.0" stroke-opacity="0.06"/><line x1="365.7" y1="82.0" x2="341.1" y2="81.5" stroke-opacity="0.05"/><line x1="341.1" y1="81.5" x2="318.0" y2="81.0" stroke-opacity="0.04"/><line x1="318.0" y1="81.0" x2="296.1" y2="80.6" stroke-opacity="0.03"/><line x1="296.1" y1="80.6" x2="275.4" y2="80.2" stroke-opacity="0.02"/><line x1="396.4" y1="81.8" x2="371.3" y2="81.3" stroke-opacity="0.04"/><line x1="371.3" y1="81.3" x2="347.5" y2="80.8" stroke-opacity="0.03"/><line x1="347.5" y1="80.8" x2="325.1" y2="80.4" stroke-opacity="0.02"/><line x1="400.5" y1="81.1" x2="376.3" y2="80.6" stroke-opacity="0.03"/><line x1="376.3" y1="80.6" x2="353.4" y2="80.2" stroke-opacity="0.02"/></g>
<rect x="0" y="41" width="1" height="581" fill="#8c8c8c"/>
<defs>
 <linearGradient id="potBody" x1="0" y1="0" x2="1" y2="0" gradientUnits="objectBoundingBox">
  <stop offset="0" stop-color="#a0a0a0"/><stop offset="0.12" stop-color="#6a6a6a"/><stop offset="0.33" stop-color="#0c0c0c"/><stop offset="1" stop-color="#000"/>
 </linearGradient>
 <linearGradient id="lidG" x1="0.8" y1="0" x2="0.2" y2="1">
  <stop offset="0" stop-color="#e4e4e4"/><stop offset="0.5" stop-color="#dcdcdc"/><stop offset="1" stop-color="#d2d2d2"/>
 </linearGradient>
 <linearGradient id="plateG" x1="0" y1="0" x2="1" y2="0">
  <stop offset="0" stop-color="#d9d9d9"/><stop offset="1" stop-color="#ececec"/>
 </linearGradient>
 <linearGradient id="glassG" x1="0" y1="0" x2="1" y2="0">
  <stop offset="0" stop-color="#5a5a5a"/><stop offset="0.2" stop-color="#6a6a6a"/><stop offset="0.6" stop-color="#454545"/><stop offset="0.82" stop-color="#0a0a0a"/><stop offset="1" stop-color="#000"/>
 </linearGradient>
 <linearGradient id="glass2G" x1="0" y1="0" x2="1" y2="0">
  <stop offset="0" stop-color="#3a3a3a"/><stop offset="0.35" stop-color="#6a6a6a"/><stop offset="0.8" stop-color="#3a3a3a"/><stop offset="1" stop-color="#0a0a0a"/>
 </linearGradient>
 <radialGradient id="baseG" cx="0.45" cy="0.6" r="0.6">
  <stop offset="0" stop-color="#ffffff"/><stop offset="0.6" stop-color="#e8e8e8"/><stop offset="1" stop-color="#b8b8b8"/>
 </radialGradient>
 <linearGradient id="bottleG" x1="0" y1="0" x2="1" y2="0">
  <stop offset="0" stop-color="#5e5e5e"/><stop offset="0.3" stop-color="#646464"/><stop offset="0.62" stop-color="#4a4a4a"/><stop offset="0.85" stop-color="#262626"/><stop offset="1" stop-color="#141414"/>
 </linearGradient>
 <radialGradient id="shoulderG" cx="0.45" cy="0.5" r="0.5">
  <stop offset="0" stop-color="#e8e8e8"/><stop offset="0.35" stop-color="#a8a8a8"/><stop offset="1" stop-color="#6e6e6e" stop-opacity="0"/>
 </radialGradient>
 <linearGradient id="cupG" x1="0" y1="0" x2="1" y2="0">
  <stop offset="0" stop-color="#585858"/><stop offset="0.3" stop-color="#6c6c6c"/><stop offset="0.6" stop-color="#565656"/><stop offset="0.85" stop-color="#222"/><stop offset="1" stop-color="#0a0a0a"/>
 </linearGradient>
 <linearGradient id="ladleG" x1="0" y1="0" x2="1" y2="0">
  <stop offset="0" stop-color="#c0c0c0"/><stop offset="0.6" stop-color="#f0f0f0"/><stop offset="1" stop-color="#d0d0d0"/>
 </linearGradient>
 <linearGradient id="bigPlateG" x1="0" y1="0" x2="1" y2="1">
  <stop offset="0" stop-color="#d0d0d0"/><stop offset="1" stop-color="#e4e4e4"/>
 </linearGradient>
</defs>

<!-- knife & spoon left -->
<path d="M8 306.5 L40 322 L49 328.5 L47 331 L38 325 L7 309z" fill="#c4c4c4"/>
<path d="M1 321 L22 332 L20 335 L0 324.5z" fill="#c4c4c4"/>
<path d="M20 337 Q24 333 32 332.5 Q39 332.5 38.5 335.5 Q34 340 26 341.5 Q19 342 20 337z" fill="#cdcdcd"/>
<!-- fork behind plate -->
<path d="M97 263 L129 273.5 L142.5 275 L142 277 L131 277.5 L96.5 265.5z" fill="#c8c8c8"/>
<!-- left plate -->
<defs>
 <linearGradient id="rimG" x1="0.2" y1="0" x2="0.6" y2="1"><stop offset="0" stop-color="#a4a4a4"/><stop offset="0.45" stop-color="#cfcfcf"/><stop offset="1" stop-color="#ececec"/></linearGradient>
 <linearGradient id="plateInG" x1="0" y1="0" x2="1" y2="0"><stop offset="0" stop-color="#d8d8d8"/><stop offset="1" stop-color="#e8e8e8"/></linearGradient>
</defs>
<g transform="rotate(-6 81.8 292.4)">
 <ellipse cx="81.8" cy="293.6" rx="44.6" ry="21.4" fill="#262626"/>
 <ellipse cx="81.8" cy="292.4" rx="44.6" ry="21.4" fill="#f4f4f4"/>
 <ellipse cx="82.2" cy="292" rx="43.2" ry="20.2" fill="url(#rimG)"/>
 <ellipse cx="84" cy="293.6" rx="37.8" ry="16.6" fill="url(#plateInG)"/>
</g>
<!-- small glass -->
<ellipse cx="163.2" cy="294" rx="12.4" ry="6" fill="url(#baseG)"/>
<path d="M161 262 L162.3 291 L164.3 291 L166 262z" fill="#1e1e1e"/>
<path d="M147.5 229 Q145.5 238 146 247 Q147 257 152 263 Q157 268 163 270 Q168 266 171 258 Q173.5 248 173 238 Q172.5 232 171.4 227.6 Q160 224 147.5 229z" fill="url(#glassG)"/>
<ellipse cx="159.4" cy="228.4" rx="12" ry="4.2" fill="#111"/>
<path d="M159.4 228.4 m-6 -2 a12 4.2 0 0 1 17 0.5 q1 2 -3 3.5z" fill="#4a4a4a" opacity="0.7"/>
<path d="M147.4 228.6 A12 4.2 0 0 0 171.4 228.2" fill="none" stroke="#f0f0f0" stroke-width="1.1"/>
<path d="M147.4 228.4 A12 4.2 0 0 1 171.4 228.4" fill="none" stroke="#d8d8d8" stroke-width="0.8" stroke-dasharray="1.5 2"/>
<!-- bottle -->
<defs>
 <linearGradient id="neckG" x1="0" y1="0" x2="1" y2="0"><stop offset="0" stop-color="#6a6a6a"/><stop offset="0.3" stop-color="#5e5e5e"/><stop offset="0.7" stop-color="#3c3c3c"/><stop offset="1" stop-color="#2a2a2a"/></linearGradient>
</defs>
<path d="M208.7 280 L209.2 341 Q206 347.8 193 347.8 Q181 347.8 177.8 342" fill="none" stroke="#111" stroke-width="1.2"/><path d="M177.2 280 Q177.5 266 186.8 258 L199.7 258 Q208.5 266 208.7 280 L208.7 340 Q206 346.5 193 346.5 Q180 346.5 177.2 340z" fill="url(#bottleG)"/>
<ellipse cx="191" cy="266" rx="13" ry="9" fill="url(#shoulderG)"/>
<path d="M186.8 224 L186.8 259 L199.7 259 L199.7 224z" fill="url(#neckG)"/>
<path d="M186.8 221 L186.8 227 Q193 229.5 199.7 227 L199.7 221z" fill="#8e8e8e"/>
<ellipse cx="193.2" cy="220.8" rx="6.4" ry="2.6" fill="#d4d4d4"/>
<!-- pot right handle -->
<path d="M137.5 309.5 L142 304.8 L169.7 316.8 L162.5 331 L157 331 L161.3 320.4 L144.5 313 L141 318z" fill="#e0e0e0"/><path d="M169.7 316.8 L162.5 331 L160.5 331 L167.5 317z" fill="#a8a8a8"/>
<!-- pot body -->
<path d="M24 371 L31 390 L40 420 L50 440 L62 453 L81 460 L110 459 L140 452 L160 440 L168 410 L166.5 352 Z" fill="url(#potBody)"/>
<!-- pot left handle -->
<path d="M1.5 401 L5 398 L36 396.5 L38 400.5 L12 403 L30 422 L63 416.5 L65.5 421.5 L31 428.5 L24 427.5 L1.5 406z" fill="#cfcfcf"/>
<path d="M1.5 403 L24 427.5 L31 428.5 L65.5 421.5 L64 423.5 L31 430 L22 429 L1.5 408z" fill="#8a8a8a"/>
<!-- pot lid -->
<defs><linearGradient id="lidG2" x1="0" y1="0.2" x2="1" y2="0.8"><stop offset="0" stop-color="#d4d4d4"/><stop offset="0.55" stop-color="#dedede"/><stop offset="1" stop-color="#e6e6e6"/></linearGradient></defs>
<path d="M24 371 L35 389 L50 397 L70 402 L95 401.5 L118 396 L138 388 L153 378 L163 366 L166 354 L166.5 358 L164 369 L154 381 L139 391 L119 399 L95 404.5 L70 405 L49 400 L34 392 Z" fill="#222"/>
<path d="M23.0 360.0 L27.0 346.0 L34.0 337.0 L43.0 330.0 L56.0 324.0 L80.0 317.5 L100.0 314.0 L120.6 313.0 L138.0 316.0 L149.0 322.5 L158.0 332.0 L164.5 345.0 L166.0 354.0 L163.0 366.0 L153.0 378.0 L138.0 388.0 L118.0 396.0 L95.0 401.5 L70.0 402.0 L50.0 397.0 L35.0 389.0 L26.0 378.0 Z" fill="#f6f6f6"/>
<path d="M24.8 359.4 L28.7 346.0 L35.5 337.4 L44.3 330.8 L57.0 325.0 L80.4 318.8 L99.9 315.5 L120.0 314.5 L136.9 317.4 L147.7 323.6 L156.4 332.7 L162.8 345.1 L164.2 353.7 L161.3 365.1 L151.6 376.6 L136.9 386.1 L117.4 393.8 L95.0 399.0 L70.6 399.5 L51.1 394.7 L36.5 387.1 L27.7 376.6 Z" fill="url(#lidG2)"/>
<!-- lid knob -->
<path d="M81 326.5 Q89 326 97 330 Q103.5 333 103.5 339 L101.5 340.5 Q101 335 96 332.5 Q89 329 81 329.5z" fill="#9c9c9c"/><path d="M80 322.5 Q95 319.5 104 327.5 Q108.5 332 107.5 337 L112.5 349 L110 350.5 L103.5 339 Q103.5 333 97 330 Q89 326 81 326.5z" fill="#f2f2f2"/>
<path d="M107.5 337 L112.5 349 L110 350.5 L103.5 339z" fill="#9a9a9a"/>
<path d="M103.5 339 L110 350.5 L108 351 L101.5 340.5z" fill="#5a5a5a"/>
<path d="M78.5 324 L82 325 L83.5 334 L79.5 333z" fill="#1a1a1a"/>
<!-- cup (utensil holder) -->
<defs>
 <linearGradient id="spoon1G" x1="0" y1="0" x2="0.3" y2="1"><stop offset="0" stop-color="#1e1e1e"/><stop offset="0.6" stop-color="#4a4a4a"/><stop offset="1" stop-color="#8a8a8a"/></linearGradient>
 <linearGradient id="spoon3G" x1="0" y1="0" x2="1" y2="1"><stop offset="0" stop-color="#9a9a9a"/><stop offset="0.35" stop-color="#1a1a1a"/><stop offset="1" stop-color="#000"/></linearGradient>
 <linearGradient id="cupInG" x1="0" y1="0" x2="1" y2="0"><stop offset="0" stop-color="#3e3e3e"/><stop offset="0.6" stop-color="#6e6e6e"/><stop offset="1" stop-color="#7a7a7a"/></linearGradient>
 <linearGradient id="spatG" x1="0" y1="0" x2="1" y2="0"><stop offset="0" stop-color="#bdbdbd"/><stop offset="0.7" stop-color="#a8a8a8"/><stop offset="1" stop-color="#7a7a7a"/></linearGradient>
</defs>
<!-- cup interior back -->
<path d="M215 250 Q213 238 246.4 236.9 Q279 238 276.5 247 Q275 258 246 259.3 Q216 260 215 250z" fill="url(#cupInG)"/>
<!-- small light spoon behind bottle -->
<path d="M189 208 Q190 204 193.5 207 L203 216 L200 218 Q192 213 189 211z" fill="#c8c8c8"/>
<!-- spoon 2 (behind right) -->
<path d="M216.5 184 Q222 182 226 196 Q229 207 226 213 L240 256 L236.5 257 L222 214 Q217 206 215.5 195 Q215 186 216.5 184z" fill="#8a8a8a"/>
<path d="M220 190 Q224 194 225 205 L223 211 Q219 204 219 194z" fill="#b0b0b0"/>
<!-- spoon 1 (front tall) -->
<path d="M207.5 181.5 Q213 179 218 190 Q223 200 222.5 210 Q222 214 220 216 L243 257 L239.5 258.5 L216.5 218 Q209 212 206 200 Q204 188 207.5 181.5z" fill="#3e3e3e"/>
<path d="M209 184 Q213.5 183 217.5 194 Q221 204 220 211 Q218 214 215 212 Q210 206 208 197 Q206.5 188 209 184z" fill="url(#spoon1G)"/>
<path d="M207.5 181.5 Q213 179 218 190 M207.5 181.5 Q204 188 206 200 Q208.5 210 215 216" fill="none" stroke="#dcdcdc" stroke-width="1.1"/>
<path d="M219 214 L242 256.5" stroke="#9a9a9a" stroke-width="1.2"/>
<!-- spoon 3 (front dark) -->
<path d="M200.5 217 Q206 213 214 216 Q223 221 230 236 L244 258 L238 259 Q225 246 214 238 Q203 230 200.5 222z" fill="url(#spoon3G)"/>
<!-- spatula -->
<path d="M277.5 161 L305 165.3 L295.6 196.3 L281.8 204 L275 213.5 L256 258 L252.6 258 L268.5 213 L270.5 202 L268 193.7z" fill="url(#spatG)"/>
<path d="M305 165.3 L295.6 196.3 L281.8 204 L275 213.5 L256 258" fill="none" stroke="#1e1e1e" stroke-width="0.9"/>
<!-- ladle -->
<defs><radialGradient id="ladleG2" cx="0.55" cy="0.1" r="0.9"><stop offset="0" stop-color="#f8f8f8"/><stop offset="0.5" stop-color="#dcdcdc"/><stop offset="1" stop-color="#a8a8a8"/></radialGradient></defs>
<path d="M252.5 257 L256.5 258.5 L297 230.5 L294.5 227z" fill="#c4c4c4"/>
<path d="M256.5 258.5 L297 230.5 L297.5 232 L258 259z" fill="#2a2a2a"/>
<path d="M294.8 229 Q297 219 312 214.2 Q326 212 334.5 220 Q338.5 225 338 231 L336.5 233 Q316 230.5 295 231.5 Z" fill="url(#ladleG2)"/>
<path d="M295 231.5 Q316 230.5 336.5 233 L337.8 234.5 Q316 233.2 294.5 235 Z" fill="#111"/>
<!-- cup body -->
<path d="M215 250 L216 293 Q217 308 232 312.5 Q244 315 254 312 Q265 308 268 298 Q275 280 276.5 247 Q276 256 246 262 Q214 261 215 250z" fill="url(#cupG)"/>
<path d="M215 250 Q216 258 246 259.3 Q275 258 276.5 247 Q276 254 246 262 Q214 261 215 250z" fill="#eeeeee"/>
<!-- selected glass outline -->
<defs>
 <radialGradient id="rimInG" cx="0.7" cy="0.6" r="0.7"><stop offset="0" stop-color="#5a5a5a"/><stop offset="0.6" stop-color="#2a2a2a"/><stop offset="1" stop-color="#050505"/></radialGradient>
 <radialGradient id="base2G" cx="0.4" cy="0.75" r="0.7"><stop offset="0" stop-color="#ffffff"/><stop offset="0.45" stop-color="#f0f0f0"/><stop offset="0.8" stop-color="#c8c8c8"/><stop offset="1" stop-color="#a0a0a0"/></radialGradient>
 <linearGradient id="plate2G" x1="0" y1="0" x2="1" y2="1"><stop offset="0" stop-color="#c6c6c6"/><stop offset="0.3" stop-color="#d6d6d6"/><stop offset="1" stop-color="#dedede"/></linearGradient>
</defs>
<g fill="#5b7fb2" stroke="#5b7fb2" stroke-width="4.5" stroke-linejoin="round">
 <ellipse cx="246.8" cy="361.5" rx="21.3" ry="13" transform="rotate(14 246.8 361.5)"/>
 <path d="M225.6 362 Q220 372 219.5 385 Q219.5 398 226 406 Q233 412 239 414 Q256 410 263 398 Q269.5 385 268 365z"/>
 <path d="M237 412 L236 440 L239.5 440 L240.5 412z"/>
 <ellipse cx="235.5" cy="442.5" rx="20.5" ry="16.5"/>
</g>
<ellipse cx="235.5" cy="442.5" rx="20.5" ry="16.5" fill="url(#base2G)"/>
<path d="M237.2 412 L236.2 440 Q237.8 442.5 239.6 440 L240.4 412z" fill="#1a1a1a"/>
<path d="M225.6 362 Q220 372 219.5 385 Q219.5 398 226 406 Q233 412 239 414 Q256 410 263 398 Q269.5 385 268 365z" fill="url(#glass2G)"/>
<g transform="rotate(14 246.8 361.5)">
<ellipse cx="246.8" cy="361.5" rx="21.3" ry="13" fill="url(#rimInG)"/>
<path d="M225.5 361.5 A21.3 13 0 0 0 268.1 361.5" fill="none" stroke="#f0f0f0" stroke-width="1.1"/>
</g>
<!-- big plate -->
<path d="M276 397 C276 379 296 366.5 323 366.5 C350 366.5 374 374 388 383 L388 446 L293 446 C283 431 276 414 276 397 Z" fill="#5b7fb2"/>
<path d="M278.2 397.3 C278.2 380.5 297.5 368.8 323 368.8 C349.3 368.8 372.8 376.4 388 385.3 L388 446 L295.2 446 C285.2 431 278.2 414 278.2 397.3 Z" fill="#ececec"/>
<path d="M281.5 398 C281.5 383 300 372 323.5 372 C348 372 370 379.5 388 388.5 L388 446 L298.5 446 C288.5 431 281.5 414 281.5 398 Z" fill="#c8c8c8"/>
<path d="M286 400 C286 386 303 376.5 325 376.5 C349 376.5 370 384 388 393 L388 446 L303 446 C292 431 286 415 286 400 Z" fill="url(#plate2G)"/>
<!-- small spoon object near cone -->
<path d="M353.5 352 Q358 347 368 353 L386 365 L387 375 Q375 377 364 370 Q352 361 353.5 352z" fill="#5b7fb2"/>
<path d="M357 354 Q361 351 368 356 L385 367.5 L385 372 Q376 373 366 368 Q357 361 357 354z" fill="#c6c6c6"/>
<path d="M368 356 L385 367.5 L385 372 Q376 373 366 368z" fill="#e6e6e6"/>
<!-- move gizmo -->
<path d="M343 415.4 L350.2 401.7 L371.2 409.9 L363.9 424.5z" fill="#f2c9c9" stroke="#e8736a" stroke-width="1"/>
<path d="M343 415.4 L363.9 424.5 L359.3 438.2 L338.3 430z" fill="#def2c6" stroke="#c8f07a" stroke-width="1"/>
<line x1="366" y1="362" x2="342.9" y2="415.4" stroke="#b8f060" stroke-width="1.2"/>
<line x1="342.9" y1="415.4" x2="332" y2="440" stroke="#f07050" stroke-width="1.2"/>
<line x1="342.9" y1="415.4" x2="388" y2="434" stroke="#70a8f0" stroke-width="1.2"/>
<path d="M372.5 345 L357.5 360.6 Q364 366 374 364z" fill="#7ee020"/>
<path d="M372.5 345 L366 362 L374 364z" fill="#5cb010"/>
<!-- view gizmo -->
<g>
 <path d="M330 87.5 L314.8 77 A2.6 6 -8 0 0 315.6 89.2 Z" fill="#eeeeee"/><ellipse cx="315" cy="83" rx="2.6" ry="6" transform="rotate(-8 315 83)" fill="#fafafa"/>
 <path d="M338.5 86 L346.8 76.1 L352.9 83.6 Z" fill="#e6e6e6"/><ellipse cx="349.85" cy="79.85" rx="2.2" ry="4.9" transform="rotate(-39 349.85 79.85)" fill="#f8f8f8"/>
 <path d="M336.4 96 L331.7 111.5 A4.7 2.4 0 0 0 341.1 111.5 Z" fill="#ececec"/><ellipse cx="336.4" cy="111.5" rx="4.7" ry="2.4" fill="#fafafa"/>
 <path d="M327 86 L336 82.3 L345.3 86 L336 90z" fill="#dedede"/>
 <path d="M327 86 L336 90 L336 101.4 L327 97z" fill="#bdbdbd"/>
 <path d="M336 90 L345.3 86 L345.3 97 L336 101.4z" fill="#a8a8a8"/>
 <path d="M327.6 64 Q336.5 60.5 345.3 64 L336.5 84.4z" fill="#5aa82a"/>
 <path d="M336.5 84.4 L327.6 64 Q332 62 336 62z" fill="#7cc84a"/>
 <path d="M343.8 95 L365.8 96.5 L361.5 110.6z" fill="#2a62e0"/>
 <path d="M343.8 95 L361.5 110.6 L355 108z" fill="#1a40a0"/>
 <path d="M330.4 97.9 L310 105.6 Q314 114 322.6 116.3z" fill="#c23a1c"/>
 <path d="M330.4 97.9 L322.6 116.3 L316 113z" fill="#8a2410"/>
</g>
<g fill="#e8e8e8" font-family="Liberation Sans" font-size="12px">
 <text x="330.5" y="58.5">y</text><text x="366" y="110">z</text><text x="304.5" y="120.5">x</text>
</g>
<path d="M367.5 57.5h7v5h-7z" fill="#b8b8b8"/><path d="M369 57.5v-1.5a2.3 2.3 0 0 1 4.6 0" fill="none" stroke="#b8b8b8" stroke-width="1.2"/>
<path d="M321.6 136.5 L312.5 141.5 L321.6 146.4 M312.5 141.5 H321.6" fill="none" stroke="#c8c8c8" stroke-width="0.9"/>
<text x="325.8" y="145" font-family="Liberation Sans" font-size="11.5px" letter-spacing="0.45" fill="#d0d0d0">Persp</text>

</svg><div class="abs" style="left:387px;top:0;width:2px;height:622px;background:#8c8c8c"></div><div class="tab" style="left:389px;top:1px;width:92px;height:18px;border-top:2px solid #3b7be0"></div><svg class="abs" style="left:396px;top:5px" width="13" height="11" viewBox="0 0 13 11"><g stroke="#444" stroke-width="1.1"><line x1="4.5" y1="1.8" x2="12" y2="1.8"/><line x1="5.5" y1="5.3" x2="12" y2="5.3"/><line x1="5.5" y1="8.8" x2="12" y2="8.8"/></g><g fill="#555"><rect x="1.2" y="1.2" width="1.5" height="1.3"/><rect x="2.5" y="4.6" width="1.5" height="1.3"/><rect x="2.5" y="8.1" width="1.5" height="1.3"/><rect x="2.6" y="2.5" width="0.8" height="6"/></g></svg><div class="txt" style="left:413.5px;top:6px;font-size:12px;letter-spacing:0.3px;color:#1b1b1b">Hierarchy</div><svg class="abs" style="left:630px;top:3px" width="30" height="16" viewBox="0 0 30 16"><rect x="2.6" y="7.6" width="8" height="5.4" fill="none" stroke="#555" stroke-width="1.2"/><path d="M4.3 7.6v-2.2a2.3 2.3 0 0 1 4.6 0" fill="none" stroke="#555" stroke-width="1.2"/><circle cx="22" cy="4" r="1.4" fill="#555"/><circle cx="22" cy="8" r="1.4" fill="#555"/><circle cx="22" cy="12" r="1.4" fill="#555"/></svg><div class="tb" style="left:389px;width:277px;border-bottom-color:#999;box-shadow:none"></div><svg class="abs" style="left:389px;top:19px" width="45" height="21" viewBox="0 0 45 21"><path d="M7 11h11M12.5 5.5v11" stroke="#3a3a3a" stroke-width="2"/><path d="M23 9.5h7l-3.5 4z" fill="#3a3a3a"/></svg><div class="abs" style="left:433px;top:22.5px;width:229px;height:15px;background:#efefef;border:1px solid #a8a8a8;border-radius:4px"></div><svg class="abs" style="left:430px;top:20px" width="20" height="18" viewBox="430 20 20 18"><circle cx="439.4" cy="29.4" r="2.5" fill="none" stroke="#555" stroke-width="1.1"/><line x1="441.2" y1="31.2" x2="443.6" y2="33.6" stroke="#555" stroke-width="1.3"/><path d="M444 29.2h3l-1.5 1.8z" fill="#555"/></svg><div class="txt" style="left:451.3px;top:24.6px;font-size:11px;letter-spacing:0.3px;color:#8c8c8c">All</div><div class="abs" style="left:389px;top:41px;width:277px;height:581px;background:#c3c3c3"></div><div class="abs" style="left:389px;top:56px;width:32px;height:566px;background:#adadad"></div><div class="abs" style="left:389px;top:41px;width:277px;height:15px;background:#e8e8e8"></div><div class="abs" style="left:389px;top:89px;width:277px;height:16px;background:#3a72b6"></div><div class="abs" style="left:389px;top:89px;width:32px;height:16px;background:#3c77c6"></div><div class="abs" style="left:666px;top:0;width:2px;height:622px;background:#1d2536"></div><svg class="abs" style="left:389px;top:41px" width="277" height="300" viewBox="389 41 277 300">
<path d="M423 46h9l-4.5 8z" fill="#808080"/><g fill="none" stroke="#1a1a1a" stroke-width="1.5" stroke-linejoin="round"><path d="M437 48.5 L446.5 43.2 L447.8 53.8 Z"/><path d="M441 48.8 L446.5 43.2 M441 48.8 L447.8 53.8 M441 48.8 L437 48.5" stroke-width="1.2"/></g><path d="M438 61l8 4.5-8 4.5z" fill="#808080"/><path d="M456.7 58.5 L462.8 61.8 L462.8 68.3 L456.7 71.5 L450.8 68.3 L450.8 61.8 Z M450.8 61.8 L456.7 65 L462.8 61.8 M456.7 65 L456.7 71.5" fill="none" stroke="#404040" stroke-width="1.05" stroke-linejoin="round"/><path d="M456.7 74.5 L462.8 77.8 L462.8 84.3 L456.7 87.5 L450.8 84.3 L450.8 77.8 Z M450.8 77.8 L456.7 81 L462.8 77.8 M456.7 81 L456.7 87.5" fill="none" stroke="#404040" stroke-width="1.05" stroke-linejoin="round"/><path d="M437 94h9l-4.5 8z" fill="#1f3d6b"/><path d="M456.7 90.5 L462.8 93.8 L462.8 100.3 L456.7 103.5 L450.8 100.3 L450.8 93.8 Z M450.8 93.8 L456.7 97 L462.8 93.8 M456.7 97 L456.7 103.5" fill="none" stroke="#e8f0fc" stroke-width="1.05" stroke-linejoin="round"/><g fill="#2f62a6" stroke="#2f62a6"><path d="M390.5 97 Q397 90.5 403.7 97 Q397 103.5 390.5 97z" fill="none" stroke-width="1.3"/><circle cx="397" cy="96.6" r="2.4" stroke="none"/><path d="M409 91.5 L412 97 L410 99 L412 99.5 L415 103 L419 101 L419 95.5 L413.5 94.5 L410.5 91z" stroke-width="0.8"/></g>
<path d="M437.5 189.5h9l-4.5 7z" fill="#777"/>
<path d="M438.5 284.5l6 4.5-6 4.5z" fill="#777"/>
<path d="M438.5 316.5l6 4.5-6 4.5z" fill="#777"/>
<g fill="none" stroke="#3a3a3a" stroke-width="1"><path d="M450 189v8 M450 302v8"/></g>
<g fill="#333"><rect x="450" y="285" width="4" height="8"/><rect x="450" y="317" width="4" height="8"/></g>
<rect x="450" y="284" width="3" height="1.3" fill="#1c6ad0"/><rect x="450" y="316" width="3" height="1.3" fill="#1c6ad0"/>
</svg><div class="txt" style="left:454.5px;top:43.2px;font-size:12.5px;font-weight:bold;color:#111">DinnerForTwoForcesTest*</div><div class="abs" style="left:651.5px;top:44px;width:3px;height:3px;border-radius:2px;background:#444"></div><div class="abs" style="left:651.5px;top:48px;width:3px;height:3px;border-radius:2px;background:#444"></div><div class="abs" style="left:651.5px;top:52px;width:3px;height:3px;border-radius:2px;background:#444"></div><div class="txt" style="left:467px;top:60px;font-size:12px;letter-spacing:0.05px;color:#1b1b1b">MARS Session</div><div class="txt" style="left:467px;top:76px;font-size:12px;letter-spacing:0.05px;color:#1b1b1b">Planes</div><div class="txt" style="left:467px;top:92px;font-size:12px;letter-spacing:0.1px;color:#fff">Cutlery Person 1</div><div class="menu" style="left:453px;top:100px;width:161px;height:405px"><div class="mi" style="top:4px"><span style="left:21px">Copy</span></div><div class="mi" style="top:23px"><span style="left:21px">Paste</span></div><div class="msep" style="top:47px"></div><div class="mi" style="top:54px"><span style="left:21px">Rename</span></div><div class="mi" style="top:73px"><span style="left:21px">Duplicate</span></div><div class="mi" style="top:92px"><span style="left:21px">Delete</span></div><div class="msep" style="top:116px"></div><div class="mi" style="top:123px"><span style="left:21px">Select Children</span></div><div class="mi" style="top:142px"><span style="left:21px;color:#b9b9b9">Select Prefab Root</span></div><div class="msep" style="top:166px"></div><div class="mi" style="top:173px"><span style="left:21px">Create Empty</span></div><div class="mi" style="top:192px"><span style="left:21px">3D Object</span><div class="arr" style="left:140px"></div></div><div class="mi" style="top:211px"><span style="left:21px">2D Object</span><div class="arr" style="left:140px"></div></div><div class="mi" style="top:230px"><span style="left:21px">Effects</span><div class="arr" style="left:140px"></div></div><div class="mi" style="top:249px"><span style="left:21px">Light</span><div class="arr" style="left:140px"></div></div><div class="mi" style="top:268px"><span style="left:21px">Audio</span><div class="arr" style="left:140px"></div></div><div class="mi" style="top:287px"><span style="left:21px">Video</span><div class="arr" style="left:140px"></div></div><div class="mi" style="top:306px"><span style="left:21px">UI</span><div class="arr" style="left:140px"></div></div><div class="mi" style="top:325px"><span style="left:21px">AI</span><div class="arr" style="left:140px"></div></div><div class="mi hl" style="top:344px"><span style="left:21px">MARS</span><div class="arr" style="left:140px"></div></div><div class="mi" style="top:363px"><span style="left:21px">XR</span><div class="arr" style="left:140px"></div></div><div class="mi" style="top:382px"><span style="left:21px">Camera</span></div></div><div class="menu" style="left:270px;top:440px;width:183px;height:178px"><div class="mi" style="top:4px"><span style="left:21px">Presets</span><div class="arr" style="left:162px"></div></div><div class="mi" style="top:23px"><span style="left:21px">Forces</span><div class="arr" style="left:162px"></div></div><div class="mi hl" style="top:42px"><span style="left:21px">Turn Into</span><div class="arr" style="left:162px"></div></div><div class="mi" style="top:61px"><span style="left:21px">MARS Session</span></div><div class="mi" style="top:80px"><span style="left:21px">Proxy Object</span></div><div class="mi" style="top:99px"><span style="left:21px">Proxy Replicator</span></div><div class="mi" style="top:118px"><span style="left:21px">Proxy Group</span></div><div class="mi" style="top:137px"><span style="left:21px">Synthetic Object</span></div><div class="mi" style="top:156px"><span style="left:21px">Data Visualizers</span><div class="arr" style="left:162px"></div></div></div><div class="menu" style="left:124px;top:478px;width:146px;height:65px"><div class="mi" style="top:4px"><span style="left:21px">Proxy Object</span></div><div class="mi hl" style="top:23px"><span style="left:21px">Proxy Plane</span></div><div class="mi" style="top:42px"><span style="left:21px">Proxy Replicator</span></div></div></body></html>
